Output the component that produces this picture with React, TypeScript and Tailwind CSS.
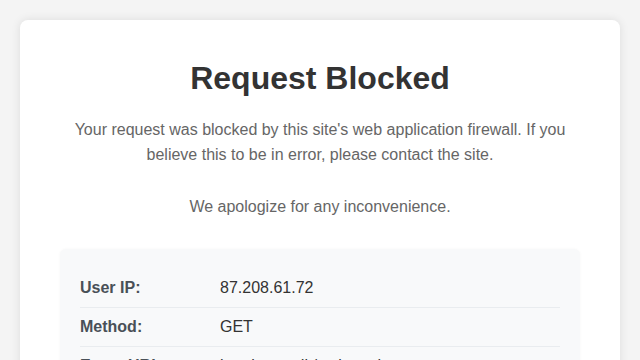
import React from "react";

export default function App() {
  const rows = [
    ["User IP:", "87.208.61.72"],
    ["Method:", "GET"],
    ["Event URL:", "bruskortet.dk/xmlrpc.php"],
  ];
  return (
    <div className="min-h-screen bg-[#f4f4f4] p-5 font-['Liberation_Sans',Arial,sans-serif]">
      <div className="mx-auto max-w-[600px] rounded-lg bg-white p-10 text-center shadow-[0_0_10px_rgba(0,0,0,0.1)]">
        <h1 className="mb-5 text-[32px] font-bold leading-[1.15] text-[#333]">Request Blocked</h1>
        <p className="mb-[26px] text-base leading-[1.6] text-[#666]">
          Your request was blocked by this site's web application firewall. If you believe this to be in error, please contact the site.
        </p>
        <p className="mb-[29px] text-base leading-[1.6] text-[#666]">We apologize for any inconvenience.</p>
        <div className="rounded-md bg-[#f8f9fa] p-5 text-left shadow-[0_0_3px_rgba(0,0,0,0.04)]">
          {rows.map(([k, v], i) => (
            <div
              key={k}
              className={`flex py-[10px] text-base leading-[1.15] ${i < rows.length - 1 ? "border-b border-[#e9ecef]" : ""}`}
            >
              <span className="w-[140px] shrink-0 font-bold text-[#495057]">{k}</span>
              <span className="text-[#333]">{v}</span>
            </div>
          ))}
        </div>
      </div>
    </div>
  );
}
